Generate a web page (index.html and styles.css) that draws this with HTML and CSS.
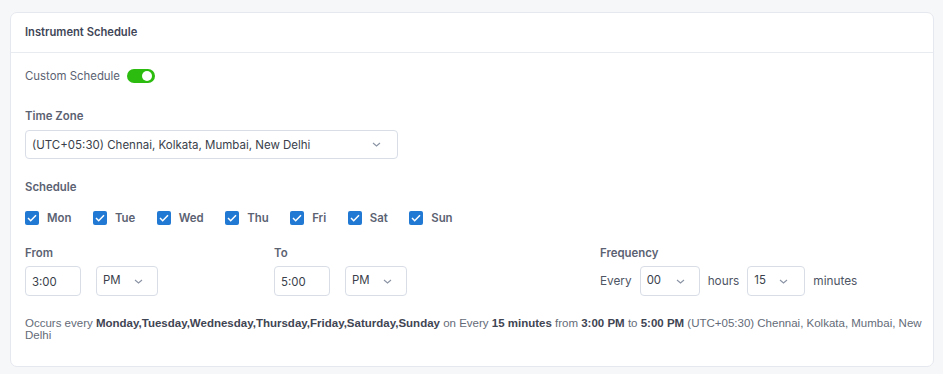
FILE: index.html
```html
<!DOCTYPE html>
<html lang="en">

<head>
    <meta charset="UTF-8">
    <meta name="viewport" content="width=device-width, initial-scale=1.0">
    <title>Instrument Schedule</title>
    <link rel="stylesheet" href="styles.css">
</head>

<body>
    <div class="card">
        <div class="card-header">Instrument Schedule</div>

        <div class="card-body">

            <!-- Custom schedule switch -->
            <div class="toggle-row">
                <span class="toggle-label">Custom Schedule</span>
                <span class="switch"><span class="knob"></span></span>
            </div>

            <!-- Time zone -->
            <div class="field tz-field">
                <p class="label">Time Zone</p>
                <div class="select select-tz">
                    <span>(UTC+05:30) Chennai, Kolkata, Mumbai, New Delhi</span>
                    <svg class="chevron" width="9" height="5" viewBox="0 0 9 5"><path d="M1 1l3.5 3L8 1" fill="none" stroke="#8a93a4" stroke-width="1.1"/></svg>
                </div>
            </div>

            <!-- Days -->
            <div class="field schedule-field">
                <p class="label">Schedule</p>
                <div class="days">
                    <label class="day"><span class="check"><svg width="10" height="8" viewBox="0 0 10 8"><path d="M1 4l2.7 2.7L9 1.2" fill="none" stroke="#fff" stroke-width="1.5"/></svg></span>Mon</label>
                    <label class="day"><span class="check"><svg width="10" height="8" viewBox="0 0 10 8"><path d="M1 4l2.7 2.7L9 1.2" fill="none" stroke="#fff" stroke-width="1.5"/></svg></span>Tue</label>
                    <label class="day"><span class="check"><svg width="10" height="8" viewBox="0 0 10 8"><path d="M1 4l2.7 2.7L9 1.2" fill="none" stroke="#fff" stroke-width="1.5"/></svg></span>Wed</label>
                    <label class="day"><span class="check"><svg width="10" height="8" viewBox="0 0 10 8"><path d="M1 4l2.7 2.7L9 1.2" fill="none" stroke="#fff" stroke-width="1.5"/></svg></span>Thu</label>
                    <label class="day"><span class="check"><svg width="10" height="8" viewBox="0 0 10 8"><path d="M1 4l2.7 2.7L9 1.2" fill="none" stroke="#fff" stroke-width="1.5"/></svg></span>Fri</label>
                    <label class="day"><span class="check"><svg width="10" height="8" viewBox="0 0 10 8"><path d="M1 4l2.7 2.7L9 1.2" fill="none" stroke="#fff" stroke-width="1.5"/></svg></span>Sat</label>
                    <label class="day"><span class="check"><svg width="10" height="8" viewBox="0 0 10 8"><path d="M1 4l2.7 2.7L9 1.2" fill="none" stroke="#fff" stroke-width="1.5"/></svg></span>Sun</label>
                </div>
            </div>

            <!-- From / To / Frequency -->
            <div class="time-grid">
                <div class="field">
                    <p class="label">From</p>
                    <div class="inline">
                        <div class="input time-input">3:00</div>
                        <div class="select select-ampm">
                            <span>PM</span>
                            <svg class="chevron" width="9" height="5" viewBox="0 0 9 5"><path d="M1 1l3.5 3L8 1" fill="none" stroke="#8a93a4" stroke-width="1.1"/></svg>
                        </div>
                    </div>
                </div>
                <div class="field">
                    <p class="label">To</p>
                    <div class="inline">
                        <div class="input time-input">5:00</div>
                        <div class="select select-ampm">
                            <span>PM</span>
                            <svg class="chevron" width="9" height="5" viewBox="0 0 9 5"><path d="M1 1l3.5 3L8 1" fill="none" stroke="#8a93a4" stroke-width="1.1"/></svg>
                        </div>
                    </div>
                </div>
                <div class="field">
                    <p class="label">Frequency</p>
                    <div class="inline freq">
                        <span class="word">Every</span>
                        <div class="select select-hours">
                            <span>00</span>
                            <svg class="chevron" width="9" height="5" viewBox="0 0 9 5"><path d="M1 1l3.5 3L8 1" fill="none" stroke="#8a93a4" stroke-width="1.1"/></svg>
                        </div>
                        <span class="word">hours</span>
                        <div class="select select-minutes">
                            <span>15</span>
                            <svg class="chevron" width="9" height="5" viewBox="0 0 9 5"><path d="M1 1l3.5 3L8 1" fill="none" stroke="#8a93a4" stroke-width="1.1"/></svg>
                        </div>
                        <span class="word">minutes</span>
                    </div>
                </div>
            </div>

            <p class="summary">Occurs every <b>Monday,Tuesday,Wednesday,Thursday,Friday,Saturday,Sunday</b> on Every <b>15 minutes</b> from <b>3:00 PM</b> to <b>5:00 PM</b> (UTC+05:30) Chennai, Kolkata, Mumbai, New Delhi</p>
        </div>
    </div>
</body>

</html>
```

FILE: styles.css
```css
body {
    margin: 0;
    background-color: #f6f7f9;
    font-family: Inter, "Noto Sans", sans-serif;
    font-size: 11.4px;
    color: #5b6272;
}

p {
    margin: 0;
}

.card {
    margin: 12px 9px 0 10px;
    background-color: #fff;
    border: solid 1px #e5e8ee;
    border-radius: 7px;
}

.card-header {
    height: 39px;
    line-height: 39px;
    padding: 0 14px;
    border-bottom: solid 1px #e8ebf0;
    font-weight: 600;
    font-size: 11.2px;
    color: #3f4657;
}

.card-body {
    padding: 16px 14px 25px;
}

.toggle-row {
    display: flex;
    align-items: center;
    height: 14px;
    gap: 7px;
}

.toggle-label {
    color: #5b6272;
}

.switch {
    position: relative;
    width: 28px;
    height: 14px;
    border-radius: 7px;
    background-color: #2cbc10;
}

.knob {
    position: absolute;
    top: 2px;
    right: 3px;
    width: 10px;
    height: 10px;
    border-radius: 50%;
    background-color: #fff;
}

.label {
    font-weight: 600;
    line-height: 16px;
    color: #5b6272;
}

.tz-field {
    margin-top: 25px;
}

.select,
.input {
    box-sizing: border-box;
    display: flex;
    align-items: center;
    border: solid 1px #d8dde6;
    border-radius: 4px;
    background-color: #fff;
    color: #3a3f4b;
    padding-left: 6px;
}

.select {
    justify-content: space-between;
}

.select-tz {
    margin-top: 6px;
    width: 373px;
    height: 29px;
    font-size: 11.5px;
    padding-right: 16px;
}

.schedule-field {
    margin-top: 20px;
}

.days {
    display: flex;
    margin-top: 16px;
}

.day {
    display: flex;
    align-items: center;
    gap: 8px;
    margin-right: 21.5px;
    font-weight: 600;
    color: #5b6272;
    line-height: 14px;
}

.check {
    display: flex;
    align-items: center;
    justify-content: center;
    width: 14px;
    height: 14px;
    border-radius: 2px;
    background-color: #2179d3;
}

.time-grid {
    display: grid;
    grid-template-columns: 249px 326px 1fr;
    margin-top: 20px;
}

.inline {
    display: flex;
    align-items: center;
    margin-top: 5px;
    gap: 15px;
}

.time-input {
    width: 56px;
    height: 30px;
    padding-top: 1px;
}

.select-ampm {
    width: 62px;
    height: 30px;
    padding-right: 14px;
    align-items: flex-start;
    padding-top: 6px;
}

.select-ampm .chevron,
.select-hours .chevron,
.select-minutes .chevron {
    margin-top: 6px;
}

.freq {
    gap: 8px;
}

.word {
    font-size: 11.8px;
    color: #4e5564;
}

.select-hours {
    width: 60px;
    height: 30px;
    padding-right: 14px;
    align-items: flex-start;
    padding-top: 6px;
}

.select-minutes {
    width: 58px;
    height: 30px;
    padding-right: 16px;
    align-items: flex-start;
    padding-top: 6px;
}

.summary {
    margin-top: 21px;
    margin-right: -8px;
    font-family: "Liberation Sans", Arial, sans-serif;
    font-size: 11.5px;
    line-height: 12px;
    color: #646b78;
}

.summary b {
    color: #3f4553;
}
```
